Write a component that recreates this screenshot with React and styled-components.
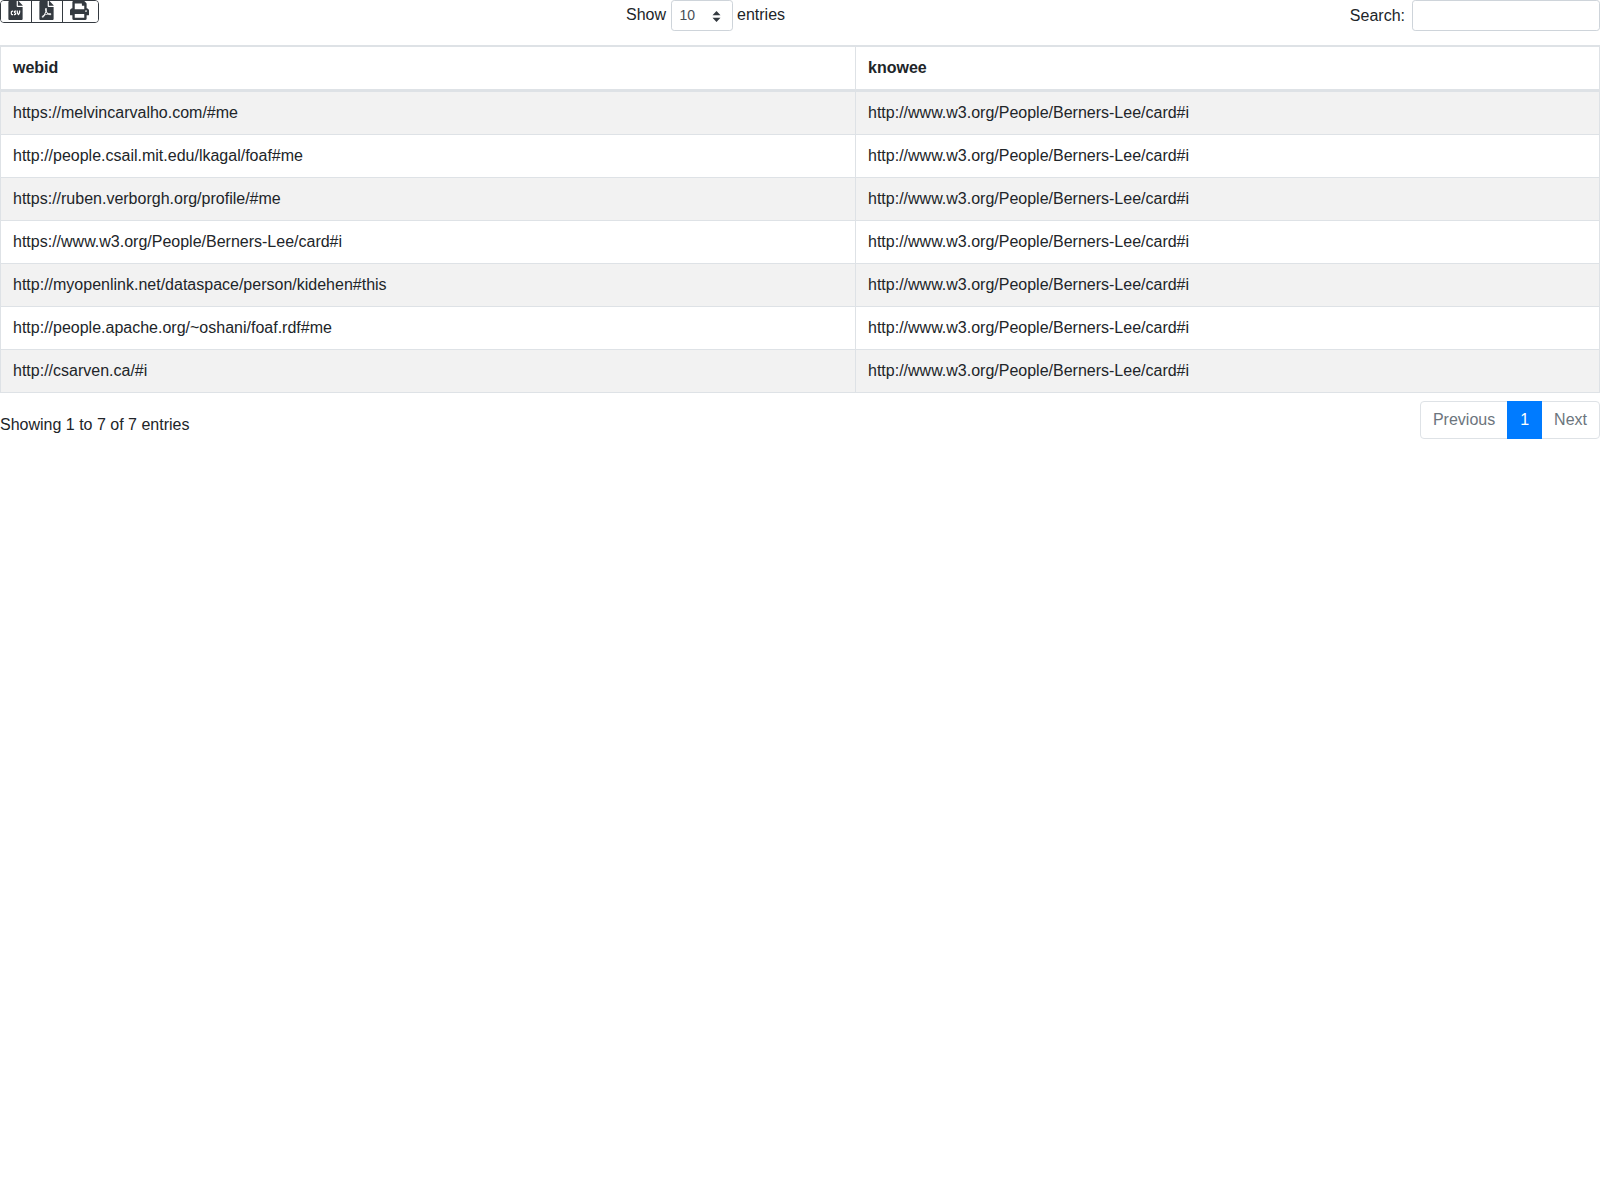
import React from 'react';
import styled, { createGlobalStyle } from 'styled-components';
import { FaFileCsv, FaFilePdf, FaPrint } from 'react-icons/fa';

const GlobalStyle = createGlobalStyle`
  * {
    box-sizing: border-box;
  }
  body {
    margin: 0;
    background: #fff;
    color: #212529;
    font-family: "Liberation Sans", Arial, sans-serif;
    font-size: 16px;
    line-height: 1.5;
  }
`

const Toolbar = styled.div`
  display: grid;
  grid-template-columns: 626px auto 1fr;
  align-items: start;
  height: 45px;
`

const ButtonGroup = styled.div`
  display: inline-flex;
  justify-self: start;
  height: 23px;
  border: 1px solid #343a40;
  border-radius: 4px;
  overflow: hidden;
`

const IconButton = styled.button`
  display: flex;
  align-items: flex-start;
  justify-content: center;
  width: ${props => props.$width}px;
  padding: 0 ${props => props.$shift || 0}px 0 0;
  border: 0;
  border-left: ${props => props.$first ? '0' : '1px solid #343a40'};
  background: #fff;
  color: #343a40;
  font-size: 19px;
  line-height: 1;

  svg {
    display: block;
  }
`

const LengthLabel = styled.label`
  display: flex;
  align-items: center;
  gap: 4.5px;
  height: 31px;
`

const LengthText = styled.span`
  padding-bottom: 2px;
`

const SelectBox = styled.div`
  position: relative;
  width: 62px;
  height: 31px;
  padding-left: 8px;
  border: 1px solid #ced4da;
  border-radius: 3.2px;
  color: #495057;
  font-size: 14px;
  line-height: 29px;

  svg {
    position: absolute;
    top: 10px;
    right: 11px;
  }
`

const SearchLabel = styled.label`
  display: flex;
  justify-self: end;
  align-items: center;
  gap: 7px;
  height: 31px;
`

const SearchInput = styled.input`
  width: 188px;
  height: 31px;
  border: 1px solid #ced4da;
  border-radius: 3.2px;
  background: #fff;
`

const Table = styled.table`
  width: 100%;
  table-layout: fixed;
  border-collapse: collapse;
`

const HeadCell = styled.th`
  height: 44px;
  padding: 8px 12px;
  border: 1px solid #dee2e6;
  border-top-width: 2px;
  border-bottom-width: 3px;
  font-weight: 700;
  text-align: left;
  width: ${props => props.$width || 'auto'};
`

const Row = styled.tr`
  background: ${props => props.$striped ? '#f2f2f2' : '#fff'};
`

const Cell = styled.td`
  height: 43px;
  padding: 9px 12px;
  border: 1px solid #dee2e6;
`

const Footer = styled.div`
  display: flex;
  justify-content: space-between;
  align-items: flex-start;
  padding-top: 8px;
`

const Info = styled.div`
  padding-top: 12px;
`

const Pagination = styled.ul`
  display: flex;
  margin: 0;
  padding: 0;
  list-style: none;
`

const PageItem = styled.li`
  height: 38px;
  padding: 6px 12px;
  border: 1px solid ${props => props.$active ? '#007bff' : '#dee2e6'};
  margin-left: ${props => props.$first ? '0' : '-1px'};
  background: ${props => props.$active ? '#007bff' : '#fff'};
  color: ${props => props.$active ? '#fff' : '#6c757d'};
  border-radius: ${props => props.$first ? '4px 0 0 4px' : props.$last ? '0 4px 4px 0' : '0'};
  z-index: ${props => props.$active ? 1 : 0};
`

const rows = [
  'https://melvincarvalho.com/#me',
  'http://people.csail.mit.edu/lkagal/foaf#me',
  'https://ruben.verborgh.org/profile/#me',
  'https://www.w3.org/People/Berners-Lee/card#i',
  'http://myopenlink.net/dataspace/person/kidehen#this',
  'http://people.apache.org/~oshani/foaf.rdf#me',
  'http://csarven.ca/#i',
];

function App() {
  return (
    <>
      <GlobalStyle/>
      <Toolbar>
        <ButtonGroup>
          <IconButton $first $width={30} $shift={2}><FaFileCsv/></IconButton>
          <IconButton $width={31} $shift={1}><FaFilePdf/></IconButton>
          <IconButton $width={36} $shift={2}><FaPrint/></IconButton>
        </ButtonGroup>
        <LengthLabel>
          <LengthText>Show</LengthText>
          <SelectBox>
            10
            <svg width="9" height="11" viewBox="0 0 9 11">
              <path d="M4.5 0 8.5 4.2H.5zM4.5 11 .5 6.8h8z" fill="#343a40"/>
            </svg>
          </SelectBox>
          <LengthText>entries</LengthText>
        </LengthLabel>
        <SearchLabel>
          Search:
          <SearchInput type="text"/>
        </SearchLabel>
      </Toolbar>
      <Table>
        <thead>
          <tr>
            <HeadCell $width="855px">webid</HeadCell>
            <HeadCell>knowee</HeadCell>
          </tr>
        </thead>
        <tbody>
          {rows.map((webid, i) => (
            <Row key={webid} $striped={i % 2 === 0}>
              <Cell>{webid}</Cell>
              <Cell>http://www.w3.org/People/Berners-Lee/card#i</Cell>
            </Row>
          ))}
        </tbody>
      </Table>
      <Footer>
        <Info>Showing 1 to 7 of 7 entries</Info>
        <Pagination>
          <PageItem $first>Previous</PageItem>
          <PageItem $active>1</PageItem>
          <PageItem $last>Next</PageItem>
        </Pagination>
      </Footer>
    </>
  );
}

export default App;
